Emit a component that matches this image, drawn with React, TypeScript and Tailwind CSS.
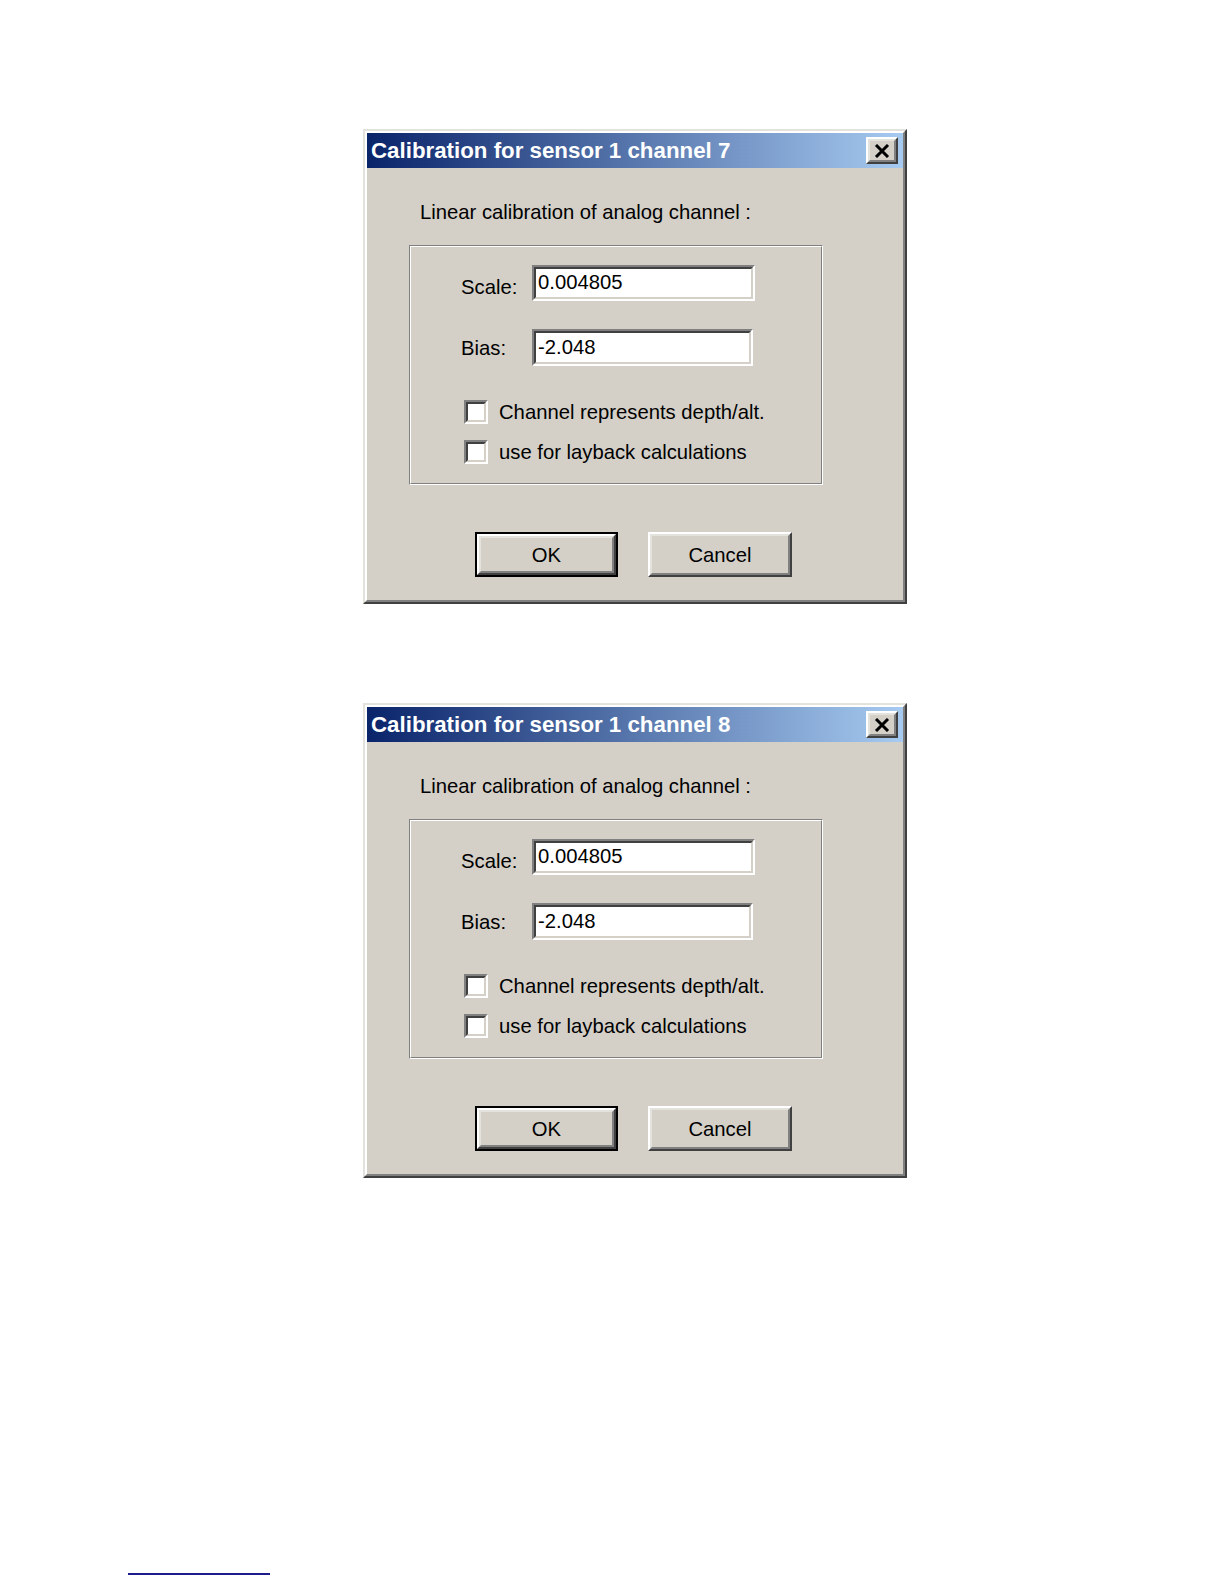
import React from "react";

const face = "bg-[#d4d0c8]";

function Raised({ children, className = "" }: { children?: React.ReactNode; className?: string }) {
  return (
    <div className={`border-2 border-t-white border-l-white border-r-[#404040] border-b-[#404040] ${className}`}>
      <div className="h-full w-full border-2 border-t-[#e4e2dc] border-l-[#e4e2dc] border-r-[#808080] border-b-[#808080] flex items-center justify-center">
        {children}
      </div>
    </div>
  );
}

function Sunken({ children, className = "" }: { children?: React.ReactNode; className?: string }) {
  return (
    <div className={`border-2 border-t-[#808080] border-l-[#808080] border-r-white border-b-white ${className}`}>
      <div className="h-full w-full border-2 border-t-[#404040] border-l-[#404040] border-r-[#d4d0c8] border-b-[#d4d0c8] bg-white flex items-center">
        {children}
      </div>
    </div>
  );
}

function Field({
  label,
  value,
  width,
  height,
  drop,
}: {
  label: string;
  value: string;
  width: string;
  height: string;
  drop: string;
}) {
  return (
    <div className="flex items-center ml-[50px]">
      <span className={`w-[71px] ${drop} text-[20.25px] leading-[24px]`}>{label}</span>
      <Sunken className={`${width} ${height}`}>
        <span className="pl-[2px] pb-[2px] text-[20.25px] leading-[24px]">{value}</span>
      </Sunken>
    </div>
  );
}

function Check({ label }: { label: string }) {
  return (
    <div className="flex items-center ml-[53px]">
      <Sunken className="w-[24px] h-[24px]" />
      <span className="ml-[11px] text-[20.25px] leading-[24px]">{label}</span>
    </div>
  );
}

function Dialog({ channel }: { channel: number }) {
  return (
    <div className={`w-[544px] h-[475px] border-2 border-t-[#e4e2dc] border-l-[#e4e2dc] border-r-[#404040] border-b-[#404040] ${face}`}>
      <div className="h-full border-2 border-t-white border-l-white border-r-[#808080] border-b-[#808080] flex flex-col">
        {/* title bar */}
        <div className="h-[35px] flex items-center justify-between bg-[linear-gradient(to_right,#0a246a,#a6caf0)] pl-[4px] pr-[5px]">
          <span className="text-white font-bold text-[22.3px] leading-[35px]">
            Calibration for sensor 1 channel {channel}
          </span>
          <Raised className={`w-[32px] h-[27px] ${face}`}>
            <svg width="16" height="14" viewBox="0 0 16 14">
              <path d="M2 1 L14 13 M14 1 L2 13" stroke="#000" strokeWidth="3" />
            </svg>
          </Raised>
        </div>

        <div className="flex flex-col text-black">
          <p className="ml-[53px] mt-[32px] text-[20.25px] leading-[24px]">Linear calibration of analog channel :</p>

          {/* etched group box */}
          <div className="ml-[42px] mt-[21px] w-[414px] h-[240px] border border-t-[#808080] border-l-[#808080] border-r-white border-b-white">
            <div className="h-full border border-t-white border-l-white border-r-[#808080] border-b-[#808080] pt-[18px]">
              <Field label="Scale:" value="0.004805" width="w-[223px]" height="h-[36px]" drop="pt-[8px]" />
              <div className="mt-[28px]">
                <Field label="Bias:" value="-2.048" width="w-[221px]" height="h-[37px]" drop="pt-[1px]" />
              </div>
              <div className="mt-[34px]">
                <Check label="Channel represents depth/alt." />
              </div>
              <div className="mt-[16px]">
                <Check label="use for layback calculations" />
              </div>
            </div>
          </div>

          <div className="flex ml-[108px] mt-[47px] gap-[30px]">
            <div className="w-[143px] h-[45px] border-2 border-black">
              <Raised className="w-full h-full">
                <span className="text-[20.25px] leading-[24px]">OK</span>
              </Raised>
            </div>
            <Raised className="w-[144px] h-[45px]">
              <span className="text-[20.25px] leading-[24px]">Cancel</span>
            </Raised>
          </div>
        </div>
      </div>
    </div>
  );
}

export default function App() {
  return (
    <div className="w-[1224px] h-[1584px] bg-white font-['Liberation_Sans',Arial,sans-serif] flex flex-col">
      <div className="ml-[363px] mt-[129px]">
        <Dialog channel={7} />
      </div>
      <div className="ml-[363px] mt-[99px]">
        <Dialog channel={8} />
      </div>
      <div className="ml-[128px] mt-[395px] w-[142px] h-[2px] bg-[#1c1c8a]" />
    </div>
  );
}
